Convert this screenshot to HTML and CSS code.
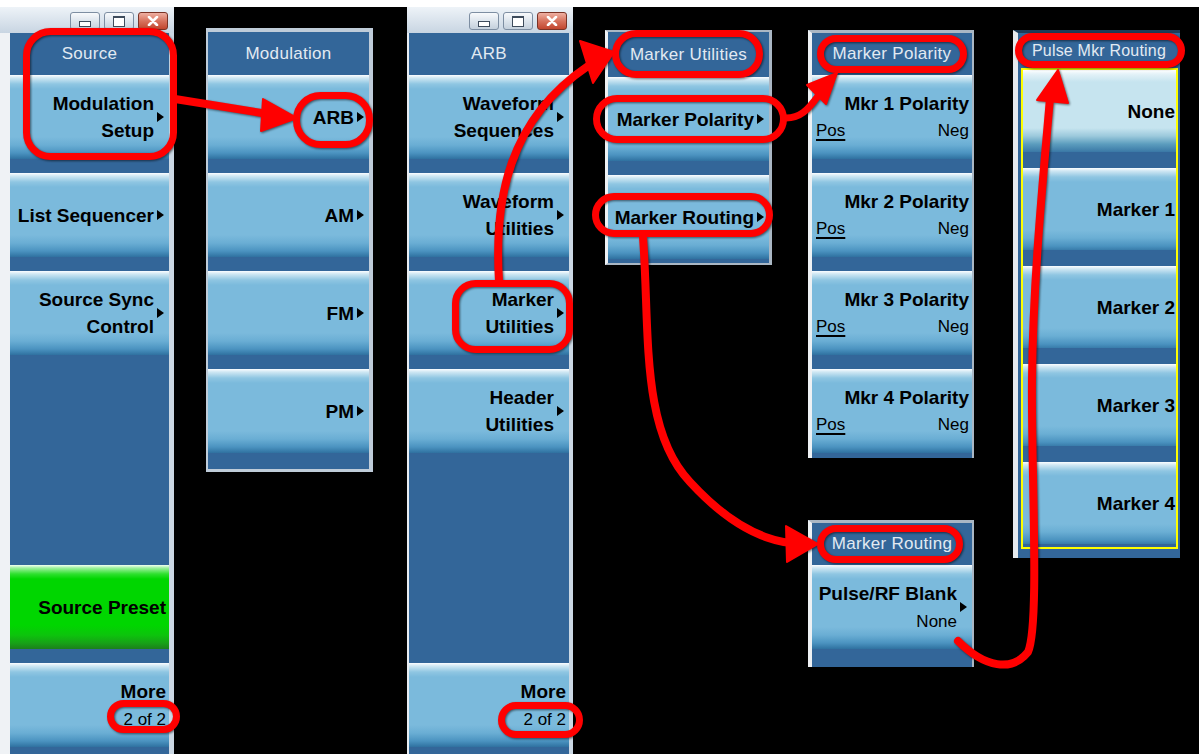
FILE: index.html
```html
<!DOCTYPE html>
<html lang="en">

<head>
    <meta charset="UTF-8">
    <meta name="viewport" content="width=device-width, initial-scale=1.0">
    <title>Source / ARB marker menus</title>
    <link rel="stylesheet" href="styles.css">
</head>

<body>
    <div class="desk">

        <!-- Source window -->
        <section class="win w-source">
            <div class="titlebar">
                <span class="tb-btn tb-min"></span>
                <span class="tb-btn tb-max"></span>
                <span class="tb-btn tb-close"><svg width="12" height="10" viewBox="0 0 12 10"><path d="M2 1 L10 9 M10 1 L2 9" stroke="#fff" stroke-width="2.6" stroke-linecap="round"/></svg></span>
            </div>
            <div class="panel">
                <div class="hdr">Source</div>
                <div class="keys">
                    <div class="key sub"><span class="lbl">Modulation<br>Setup</span></div>
                    <div class="key sub"><span class="lbl">List Sequencer</span></div>
                    <div class="key sub"><span class="lbl">Source Sync<br>Control</span></div>
                    <div class="key blank"></div>
                    <div class="key blank"></div>
                    <div class="key green"><span class="lbl">Source Preset</span></div>
                    <div class="key"><span class="lbl">More<br><span class="reg">2 of 2</span></span></div>
                </div>
            </div>
        </section>

        <!-- Modulation -->
        <section class="win w-mod">
            <div class="panel">
                <div class="hdr">Modulation</div>
                <div class="keys">
                    <div class="key sub"><span class="lbl">ARB</span></div>
                    <div class="key sub"><span class="lbl">AM</span></div>
                    <div class="key sub"><span class="lbl">FM</span></div>
                    <div class="key sub"><span class="lbl">PM</span></div>
                </div>
            </div>
        </section>

        <!-- ARB window -->
        <section class="win w-arb">
            <div class="titlebar">
                <span class="tb-btn tb-min"></span>
                <span class="tb-btn tb-max"></span>
                <span class="tb-btn tb-close"><svg width="12" height="10" viewBox="0 0 12 10"><path d="M2 1 L10 9 M10 1 L2 9" stroke="#fff" stroke-width="2.6" stroke-linecap="round"/></svg></span>
            </div>
            <div class="panel">
                <div class="hdr">ARB</div>
                <div class="keys">
                    <div class="key sub"><span class="lbl">Waveform<br>Sequences</span></div>
                    <div class="key sub"><span class="lbl">Waveform<br>Utilities</span></div>
                    <div class="key sub"><span class="lbl">Marker<br>Utilities</span></div>
                    <div class="key sub"><span class="lbl">Header<br>Utilities</span></div>
                    <div class="key blank"></div>
                    <div class="key blank"></div>
                    <div class="key"><span class="lbl">More<br><span class="reg">2 of 2</span></span></div>
                </div>
            </div>
        </section>

        <!-- Marker Utilities -->
        <section class="win w-mu">
            <div class="panel">
                <div class="hdr">Marker Utilities</div>
                <div class="keys">
                    <div class="key sub"><span class="lbl">Marker Polarity</span></div>
                    <div class="key sub"><span class="lbl">Marker Routing</span></div>
                </div>
            </div>
        </section>

        <!-- Marker Polarity -->
        <section class="win w-mp">
            <div class="panel">
                <div class="hdr">Marker Polarity</div>
                <div class="keys">
                    <div class="key pol"><span class="lbl">Mkr 1 Polarity<span class="row"><u>Pos</u><span>Neg</span></span></span></div>
                    <div class="key pol"><span class="lbl">Mkr 2 Polarity<span class="row"><u>Pos</u><span>Neg</span></span></span></div>
                    <div class="key pol"><span class="lbl">Mkr 3 Polarity<span class="row"><u>Pos</u><span>Neg</span></span></span></div>
                    <div class="key pol"><span class="lbl">Mkr 4 Polarity<span class="row"><u>Pos</u><span>Neg</span></span></span></div>
                </div>
            </div>
        </section>

        <!-- Marker Routing -->
        <section class="win w-mr">
            <div class="panel">
                <div class="hdr">Marker Routing</div>
                <div class="keys">
                    <div class="key sub"><span class="lbl">Pulse/RF Blank<br><span class="reg">None</span></span></div>
                </div>
            </div>
        </section>

        <!-- Pulse Mkr Routing -->
        <section class="win w-pmr">
            <div class="panel">
                <div class="hdr">Pulse Mkr Routing</div>
                <div class="ybox">
                    <div class="keys">
                        <div class="key hl"><span class="lbl">None</span></div>
                        <div class="key"><span class="lbl">Marker 1</span></div>
                        <div class="key"><span class="lbl">Marker 2</span></div>
                        <div class="key"><span class="lbl">Marker 3</span></div>
                        <div class="key"><span class="lbl">Marker 4</span></div>
                    </div>
                </div>
            </div>
        </section>

        <!-- red call-outs drawn over the menus -->
        <svg class="marks" width="1199" height="754" viewBox="0 0 1199 754">
            <g fill="none" stroke="#f00" stroke-width="7" stroke-linecap="round">
                <rect x="26.5" y="31.5" width="147" height="125" rx="24" />
                <rect x="296.5" y="95.5" width="73" height="49" rx="24" />
                <rect x="455.5" y="283.5" width="114" height="66" rx="20" />
                <rect x="615.5" y="33.5" width="144" height="41" rx="20.5" />
                <rect x="596.5" y="98.5" width="187" height="41" rx="20.5" />
                <rect x="595.5" y="196.5" width="174" height="37" rx="18.5" />
                <rect x="820.5" y="38.5" width="143" height="31" rx="15.5" />
                <rect x="820.5" y="528.5" width="139" height="31" rx="15.5" />
                <rect x="1018.5" y="36.5" width="163" height="28" rx="14" />
                <rect x="110.5" y="703.5" width="66" height="26" rx="13" />
                <rect x="501.5" y="705.5" width="78" height="29" rx="14.5" />
                <path d="M175 99 L268 114" stroke-width="8" />
                <path d="M499 281 C494 200 508 120 588 66" stroke-width="8" />
                <path d="M786 118 C800 118 808 110 818 96" />
                <path d="M643 237 C650 330 640 430 690 482 C725 520 760 540 792 543" stroke-width="8" />
                <path d="M958 641 C985 668 1012 672 1028 652 C1040 625 1031 470 1032 380 C1033 280 1043 180 1050 98" stroke-width="8" />
            </g>
            <g fill="#f00" stroke="#f00" stroke-width="2" stroke-linejoin="round">
                <polygon points="263,99 297,118 261,131" />
                <polygon points="614,52 580,41 593,83" />
                <polygon points="837,73 807,85 826,104" />
                <polygon points="818,544 786,526 787,562" />
                <polygon points="1058,70 1037,100 1068,103" />
            </g>
        </svg>
    </div>
</body>

</html>
```

FILE: styles.css
```css
* {
    margin: 0;
    padding: 0;
    box-sizing: border-box;
}

body {
    background: #000;
    font-family: "Liberation Sans", Arial, sans-serif;
}

.desk {
    position: relative;
    width: 1199px;
    height: 754px;
    overflow: hidden;
    background: linear-gradient(#fff 0, #fff 7px, #000 7px);
}

/* windows sit on the black desk at their own place */
.win {
    position: absolute;
    display: flex;
    flex-direction: column;
}

.titlebar {
    flex: none;
    height: 26px;
    display: flex;
    justify-content: flex-end;
    align-items: center;
    gap: 4px;
    padding: 2px 6px 0 0;
    background: linear-gradient(#eef3f8, #d7e1eb 60%, #c8d5e2);
}

.tb-btn {
    width: 30px;
    height: 18px;
    border: 1px solid #7d8ea2;
    border-radius: 3px;
    background: linear-gradient(#f8fafc, #dde5ed 50%, #c4d0dc);
    display: flex;
    align-items: center;
    justify-content: center;
}

.tb-min::before {
    content: "";
    width: 10px;
    height: 4px;
    margin-top: 5px;
    border: 1px solid #3e4c5c;
    background: #fff;
}

.tb-max::before {
    content: "";
    width: 10px;
    height: 8px;
    border: 1px solid #3e4c5c;
    border-top-width: 2px;
    background: #fff;
}

.tb-close {
    border-color: #7a3326;
    background: linear-gradient(#eeb0a2, #d7735e 50%, #c2472f);
}

.panel {
    flex: 1;
    display: flex;
    flex-direction: column;
    overflow: hidden;
    background: #336699;
}

.hdr {
    flex: none;
    height: 42px;
    display: flex;
    align-items: center;
    justify-content: center;
    color: #e2eaf2;
    font-size: 17px;
    letter-spacing: .3px;
}

.keys {
    display: flex;
    flex-direction: column;
    gap: 14px;
}

.key {
    flex: none;
    height: 84px;
    display: flex;
    align-items: center;
    justify-content: flex-end;
    padding-right: 3px;
    text-align: right;
    color: #000;
    font-size: 19px;
    font-weight: bold;
    line-height: 27px;
    background: linear-gradient(#fbfdff 0, #cfe7f3 3px, #8fc6e2 9px, #7bbadc 14px, #7bbadc 62px, #6aaed4 70px, #4b93c0 78px, #2f71a0 84px);
}

.key.sub {
    padding-right: 5px;
}

.key.sub::after {
    content: "";
    margin-left: 3px;
    border-left: 7px solid #000;
    border-top: 5px solid transparent;
    border-bottom: 5px solid transparent;
}

.key.blank {
    visibility: hidden;
}

.key.green {
    background: linear-gradient(#f2fff2 0, #9ef09e 3px, #2ee02e 9px, #00d600 14px, #00d600 60px, #0cc40c 70px, #17a217 78px, #1c7f1c 84px);
}

.key.hl {
    background: linear-gradient(#ffffff 0, #e4f2f8 4px, #c6e4ef 12px, #c6e4ef 58px, #9cc9dc 66px, #5c9dbe 74px, #3a78a6 82px);
}

.reg {
    font-size: 17px;
    font-weight: normal;
}

.key.pol {
    padding: 0 3px 0 4px;
}

.key.pol .lbl {
    flex: 1;
}

.key.pol .row {
    display: flex;
    justify-content: space-between;
    font-size: 17px;
    font-weight: normal;
}

.key.pol u {
    text-decoration-thickness: 2px;
    text-underline-offset: 3px;
}

/* each window */
.w-source {
    left: 0;
    top: 7px;
    width: 174px;
    height: 747px;
}

.w-source .panel {
    border-left: 10px solid #eff2f5;
    border-right: 5px solid #cbd8e4;
}

.w-mod {
    left: 206px;
    top: 28px;
    width: 167px;
    height: 444px;
}

.w-mod .panel {
    border-style: solid;
    border-color: #bfccd9;
    border-width: 4px 4px 3px 2px;
}

.w-mod .hdr {
    height: 43px;
}

.w-arb {
    left: 407px;
    top: 7px;
    width: 166px;
    height: 747px;
}

.w-arb .panel {
    border-left: 2px solid #e8edf2;
    border-right: 4px solid #cbd8e4;
}

.w-mu {
    left: 605px;
    top: 30px;
    width: 167px;
    height: 235px;
}

.w-mu .panel {
    border-style: solid;
    border-color: #aab7c4;
    border-left-color: #eef1f4;
    border-width: 2px 3px 2px 3px;
}

.w-mu .hdr {
    height: 45px;
}

.w-mp {
    left: 808px;
    top: 30px;
    width: 166px;
    height: 428px;
}

.w-mr {
    left: 808px;
    top: 520px;
    width: 166px;
    height: 147px;
}

.w-mp .panel,
.w-mr .panel {
    border-style: solid;
    border-color: #aab7c4;
    border-left-color: #eef1f4;
    border-width: 3px 2px 0 4px;
}

.w-pmr {
    left: 1013px;
    top: 30px;
    width: 167px;
    height: 528px;
}

.w-pmr .panel {
    border-top: 3px solid #1d3c58;
    border-left: 5px solid #e6eaee;
}

.w-pmr .hdr {
    height: 35px;
    font-size: 16px;
    letter-spacing: .2px;
}

.ybox {
    margin: 0 2px 0 3px;
    padding-bottom: 3px;
    border: 2px solid #ff0;
}

.ybox .keys {
    gap: 16px;
}

.ybox .key {
    height: 82px;
    padding-right: 1px;
}

.marks {
    position: absolute;
    left: 0;
    top: 0;
    pointer-events: none;
    filter: drop-shadow(1px 1px 1px rgba(0, 0, 0, .55));
}
```
